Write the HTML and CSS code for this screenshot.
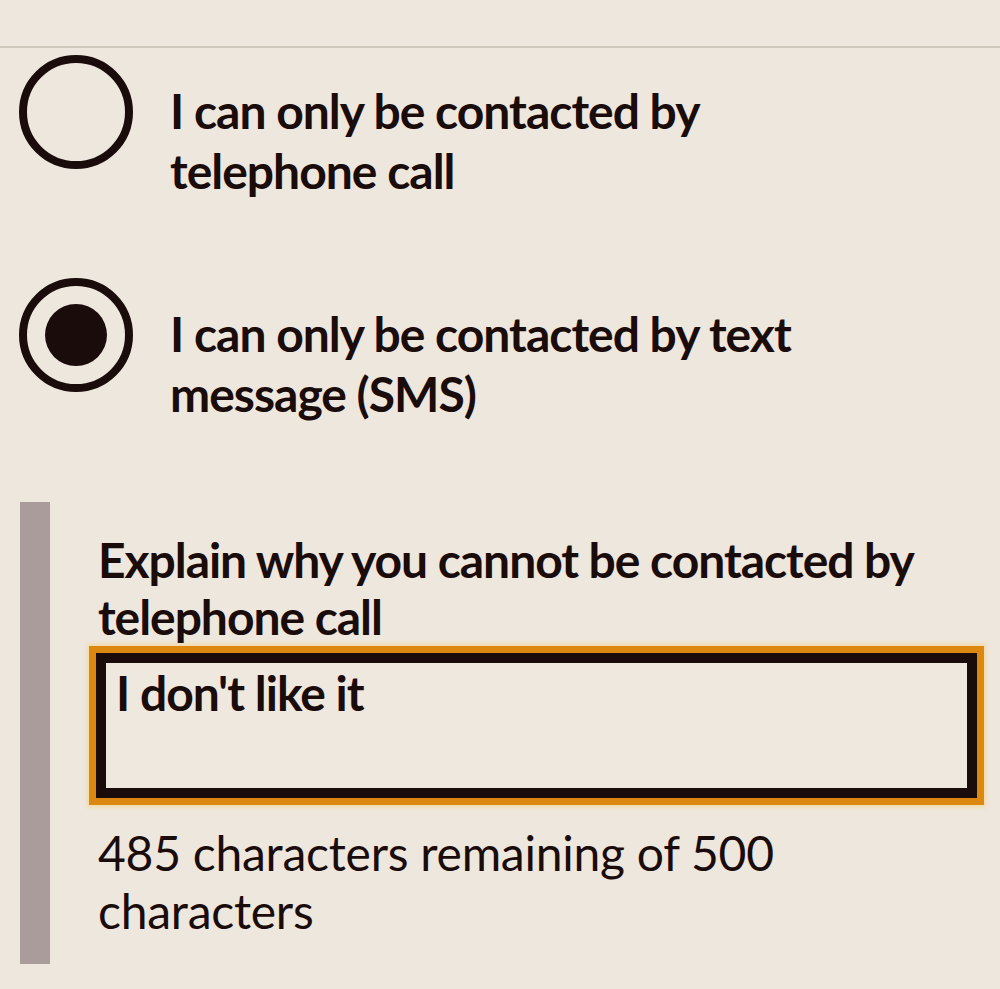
FILE: index.html
```html
<!DOCTYPE html>
<html lang="en">
<head>
<meta charset="utf-8">
<title>Contact preference</title>
<link rel="stylesheet" href="styles.css">
</head>
<body>
<div class="page">
  <hr class="rule">
  <div class="radios">
    <label class="radio-item">
      <span class="radio"></span>
      <span class="radio-label">I can only be contacted by<br>telephone call</span>
    </label>
    <label class="radio-item">
      <span class="radio checked"><span class="dot"></span></span>
      <span class="radio-label">I can only be contacted by text<br>message (SMS)</span>
    </label>
  </div>
  <div class="conditional">
    <div class="field-label">Explain why you cannot be contacted by<br>telephone call</div>
    <textarea class="textarea">I don't like it</textarea>
    <div class="count">485 characters remaining of 500<br>characters</div>
  </div>
</div>
</body>
</html>
```
FILE: styles.css
```css
html, body {
  margin: 0;
  padding: 0;
  background: #eee7de;
}
body {
  font-family: Lato, "Open Sans", sans-serif;
  color: #1b0c0c;
}
.page {
  width: 1000px;
  height: 989px;
  overflow: hidden;
}
.rule {
  margin: 46px 0 0 0;
  border: 0;
  height: 2px;
  background: #cfc6bc;
}
.radios {
  display: flex;
  flex-direction: column;
  gap: 77px;
  padding: 7px 0 0 19px;
}
.radio-item {
  display: flex;
  align-items: flex-start;
  gap: 37px;
}
.radio {
  box-sizing: border-box;
  flex: none;
  width: 114px;
  height: 114px;
  border: 8px solid #1b0c0c;
  border-radius: 50%;
  display: flex;
  align-items: center;
  justify-content: center;
}
.dot {
  width: 62px;
  height: 62px;
  border-radius: 50%;
  background: #1b0c0c;
}
.radio-label {
  margin-top: 26px;
  font-size: 48px;
  line-height: 60px;
  font-weight: 700;
  letter-spacing: -1px;
  white-space: nowrap;
}
.conditional {
  margin: 78px 0 0 20px;
  border-left: 30px solid #a99c9a;
  padding: 29px 0 24px 48px;
  height: 409px;
}
.field-label {
  font-size: 48px;
  line-height: 57px;
  font-weight: 700;
  letter-spacing: -1.05px;
  white-space: nowrap;
}
.textarea {
  display: block;
  box-sizing: border-box;
  margin: 8px 0 0 -2px;
  width: 881px;
  height: 145px;
  border: 10px solid #1b0c0c;
  padding: 0 10px;
  background: #efe8df;
  color: #1b0c0c;
  font-family: Lato, "Open Sans", sans-serif;
  font-size: 48px;
  line-height: 60px;
  font-weight: 700;
  letter-spacing: -1px;
  resize: none;
  overflow: hidden;
  outline: none;
  box-shadow: 0 0 0 7px #dc8810, 0 0 4px 9px rgba(250, 205, 90, 0.45);
}
.count {
  margin-top: 26px;
  font-size: 48px;
  line-height: 58px;
  font-weight: 400;
  letter-spacing: -0.25px;
  white-space: nowrap;
}
```
